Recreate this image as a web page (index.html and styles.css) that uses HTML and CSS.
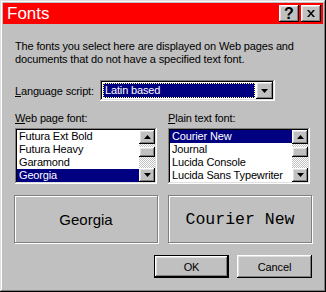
FILE: index.html
```html
<!DOCTYPE html>
<html>
<head>
<meta charset="utf-8">
<link rel="stylesheet" href="styles.css">
</head>
<body>
<div class="window">
  <div class="titlebar">
    <span class="title">Fonts</span>
    <div class="tbtns">
      <span class="tbtn help">?</span>
      <span class="tbtn close"><svg width="8" height="7" viewBox="0 0 8 7"><path d="M0 0h2l2 2.5L6 0h2L5 3.5 8 7H6L4 4.5 2 7H0l3-3.5z" fill="#000"/></svg></span>
    </div>
  </div>
  <div class="content">
    <p class="desc">The fonts you select here are displayed on Web pages and<br>documents that do not have a specified text font.</p>
    <div class="langrow">
      <span class="lbl-lang"><u>L</u>anguage script:</span>
      <div class="combo sunken">
        <div class="combo-val"><span>Latin based</span></div>
        <div class="combo-btn raised"><svg width="7" height="4" viewBox="0 0 7 4"><path d="M0 0h7L3.5 4z" fill="#000"/></svg></div>
      </div>
    </div>
    <div class="lists">
      <div class="col">
        <div class="lbl"><u>W</u>eb page font:</div>
        <div class="listbox sunken">
          <ul class="items">
            <li>Futura Ext Bold</li>
            <li>Futura Heavy</li>
            <li>Garamond</li>
            <li class="sel">Georgia</li>
          </ul>
          <div class="sbar">
            <div class="sb-btn raised"><svg width="7" height="4" viewBox="0 0 7 4"><path d="M3.5 0L7 4H0z" fill="#000"/></svg></div>
            <div class="track"><div class="thumb raised"></div></div>
            <div class="sb-btn raised"><svg width="7" height="4" viewBox="0 0 7 4"><path d="M0 0h7L3.5 4z" fill="#000"/></svg></div>
          </div>
        </div>
      </div>
      <div class="col">
        <div class="lbl"><u>P</u>lain text font:</div>
        <div class="listbox sunken">
          <ul class="items">
            <li class="sel">Courier New</li>
            <li>Journal</li>
            <li>Lucida Console</li>
            <li>Lucida Sans Typewriter</li>
          </ul>
          <div class="sbar">
            <div class="sb-btn raised"><svg width="7" height="4" viewBox="0 0 7 4"><path d="M3.5 0L7 4H0z" fill="#000"/></svg></div>
            <div class="track"><div class="thumb raised"></div></div>
            <div class="sb-btn raised"><svg width="7" height="4" viewBox="0 0 7 4"><path d="M0 0h7L3.5 4z" fill="#000"/></svg></div>
          </div>
        </div>
      </div>
    </div>
    <div class="previews">
      <div class="preview pv-sans">Georgia</div>
      <div class="preview pv-mono">Courier New</div>
    </div>
    <div class="buttons">
      <button class="btn default">OK</button>
      <button class="btn">Cancel</button>
    </div>
  </div>
</div>
</body>
</html>
```

FILE: styles.css
```css
* { box-sizing: border-box; }
body {
  margin: 0;
  background: #c0c0c0;
  font-family: "Liberation Sans", Arial, sans-serif;
  font-size: 11px;
  letter-spacing: -0.15px;
  color: #000;
}
.window {
  width: 326px;
  height: 292px;
  background: #c0c0c0;
  padding: 3px;
  box-shadow: inset -1px -1px #000, inset 1px 1px #dfdfdf, inset -2px -2px #808080, inset 2px 2px #fff;
}
.raised {
  background: #c0c0c0;
  box-shadow: inset -1px -1px #000, inset 1px 1px #fff, inset -2px -2px #808080, inset 2px 2px #dfdfdf;
}
.sunken {
  box-shadow: inset -1px -1px #fff, inset 1px 1px #808080, inset -2px -2px #dfdfdf, inset 2px 2px #000;
}
.titlebar {
  height: 21px;
  background: #ff0000;
  display: flex;
  align-items: center;
  padding: 0 2px 0 4px;
}
.title {
  color: #fff;
  font-size: 17px;
  line-height: 21px;
  letter-spacing: 0;
}
.tbtns {
  margin-left: auto;
  display: flex;
  gap: 2px;
}
.tbtn {
  width: 20px;
  height: 17px;
  display: flex;
  align-items: center;
  justify-content: center;
  background: #c0c0c0;
  box-shadow: inset -1px -1px #000, inset 1px 1px #fff, inset -2px -2px #808080, inset 2px 2px #dfdfdf;
}
.help {
  font-weight: bold;
  font-size: 16px;
  line-height: 17px;
  letter-spacing: 0;
  padding-bottom: 1px;
}
.content {
  padding: 16px 11px 0 12px;
}
.desc {
  margin: 0;
  line-height: 13px;
}
.langrow {
  display: flex;
  align-items: center;
  margin-top: 14px;
  height: 21px;
}
.lbl-lang {
  width: 85px;
}
.combo {
  width: 175px;
  height: 21px;
  padding: 2px;
  display: flex;
  background: #fff;
}
.combo-val {
  flex: 1;
  padding: 1px;
}
.combo-val span {
  display: block;
  height: 100%;
  background: #000080;
  color: #fff;
  border: 1px dotted #ffff80;
  padding-left: 1px;
  line-height: 13px;
}
.combo-btn {
  width: 17px;
  height: 17px;
  display: flex;
  align-items: center;
  justify-content: center;
}
.lists {
  display: grid;
  grid-template-columns: 142px 142px;
  column-gap: 11px;
  margin-top: 11px;
}
.lbl {
  line-height: 13px;
}
.listbox {
  margin-top: 3px;
  height: 56px;
  padding: 2px;
  display: flex;
  background: #fff;
}
.items {
  flex: 1;
  list-style: none;
  margin: 0;
  padding: 0;
  min-width: 0;
}
.items li {
  height: 13px;
  line-height: 13px;
  padding-left: 2px;
  white-space: nowrap;
  overflow: hidden;
}
.items .sel {
  background: #000080;
  color: #fff;
}
.sbar {
  width: 16px;
  display: flex;
  flex-direction: column;
}
.sb-btn {
  height: 14px;
  display: flex;
  align-items: center;
  justify-content: center;
}
.track {
  flex: 1;
  background-color: #fff;
  background-image: conic-gradient(#c0c0c0 25%, #fff 0 50%, #c0c0c0 0 75%, #fff 0);
  background-size: 2px 2px;
  padding-top: 3px;
}
.thumb {
  height: 10px;
}
.previews {
  display: flex;
  gap: 10px;
  margin-top: 11px;
  margin-left: -1px;
}
.preview {
  width: 144px;
  height: 48px;
  border: 1px solid #808080;
  box-shadow: inset 1px 1px #fff, 1px 1px #fff;
  display: flex;
  align-items: center;
  justify-content: center;
  letter-spacing: 0;
}
.pv-sans {
  font-family: "Liberation Sans", Arial, sans-serif;
  font-size: 15px;
}
.pv-mono {
  font-family: "Liberation Mono", "Courier New", monospace;
  font-size: 16.5px;
}
.buttons {
  display: flex;
  justify-content: flex-end;
  gap: 8px;
  margin-top: 12px;
}
.btn {
  width: 75px;
  height: 23px;
  border: 0;
  padding: 0;
  font: inherit;
  letter-spacing: inherit;
  color: #000;
  background: #c0c0c0;
  box-shadow: inset -1px -1px #000, inset 1px 1px #fff, inset -2px -2px #808080, inset 2px 2px #dfdfdf;
}
.btn.default {
  box-shadow: inset 0 0 0 1px #000, inset -2px -2px #000, inset 2px 2px #fff, inset -3px -3px #808080, inset 3px 3px #dfdfdf;
}
```
